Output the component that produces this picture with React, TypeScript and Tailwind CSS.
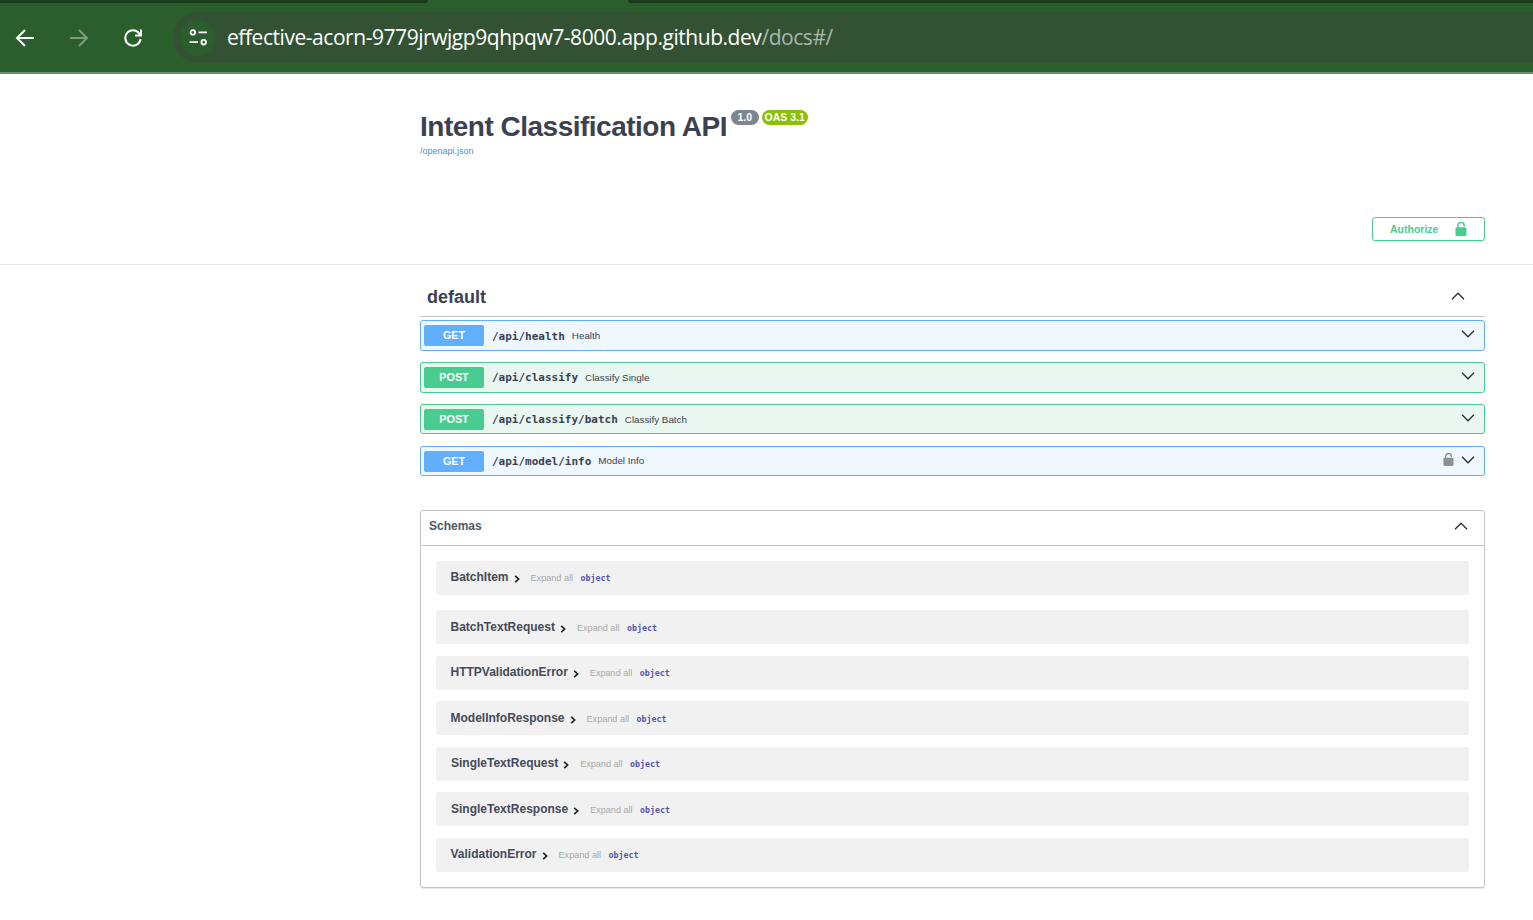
const sans = "font-['Liberation_Sans',Arial,sans-serif]";
const mono = "font-['DejaVu_Sans_Mono','Liberation_Mono',monospace]";

type Op = { method: "GET" | "POST"; path: string; summary: string; locked?: boolean; h: string; mt: string; labelMt: string; summaryMt: string };

const ops: Op[] = [
  { method: "GET", path: "/api/health", summary: "Health", h: "h-[31px]", mt: "mt-[3px]", labelMt: "mt-[4px]", summaryMt: "mt-px" },
  { method: "POST", path: "/api/classify", summary: "Classify Single", h: "h-[31px]", mt: "mt-[11px]", labelMt: "mt-[2px]", summaryMt: "mt-px" },
  { method: "POST", path: "/api/classify/batch", summary: "Classify Batch", h: "h-[30px]", mt: "mt-[11px]", labelMt: "mt-[2px]", summaryMt: "mt-[3px]" },
  { method: "GET", path: "/api/model/info", summary: "Model Info", locked: true, h: "h-[30px]", mt: "mt-[12px]", labelMt: "mt-[2px]", summaryMt: "mt-px" },
];

const schemas = [
  { name: "BatchItem", row: "mt-[15px] pl-[14.5px]" },
  { name: "BatchTextRequest", row: "mt-[15px] pl-[14.5px] pt-[2px]" },
  { name: "HTTPValidationError", row: "mt-[12px] pl-[14.5px]" },
  { name: "ModelInfoResponse", row: "mt-[11px] pl-[14.5px] pt-[2px]" },
  { name: "SingleTextRequest", row: "mt-[12px] pl-[15px]" },
  { name: "SingleTextResponse", row: "mt-[11px] pl-[15px] pt-[2px]" },
  { name: "ValidationError", row: "mt-[12px] pl-[14.5px]" },
];

function Chevron({ up, className }: { up?: boolean; className?: string }) {
  return (
    <svg viewBox="0 0 14 8" className={className} fill="none" stroke="#2b2f36" strokeWidth="1.3">
      <path d={up ? "M1 7.2 7 1.2l6 6" : "M1 .8l6 6 6-6"} />
    </svg>
  );
}

function Lock({ color, className }: { color: string; className?: string }) {
  return (
    <svg viewBox="0 0 12 14" className={className}>
      <path d="M2.8 6.5V3.6a3.2 3.2 0 0 1 6.4 0V4.6" fill="none" stroke={color} strokeWidth="1.5" />
      <rect x="0.5" y="5.2" width="11" height="8.8" rx="1.6" fill={color} />
    </svg>
  );
}

function Browser() {
  return (
    <header className="h-[74px] bg-[#2a5e2c] border-b-2 border-b-[#6d8f6e] relative shrink-0">
      <div className="absolute left-0 top-0 h-[3px] w-[428px] bg-[#1b3b1c] rounded-br-md" />
      <div className="absolute left-[628px] right-0 top-0 h-[3px] bg-[#1b3b1c] rounded-bl-md" />
      <div className="flex items-center h-[72px] pt-[3px]">
        <svg viewBox="0 0 20 20" className="w-5 h-5 ml-[15px]" fill="none" stroke="#fff" strokeWidth="2">
          <path d="M19 10H2M10 2l-8 8 8 8" />
        </svg>
        <svg viewBox="0 0 20 20" className="w-5 h-5 ml-[34px]" fill="none" stroke="#7f9d80" strokeWidth="2">
          <path d="M1 10h17M10 2l8 8-8 8" />
        </svg>
        <svg viewBox="0 0 20 20" className="w-5 h-5 ml-[34px] -mt-px" fill="none" stroke="#fff" strokeWidth="2">
          <path d="M17.2 8.2A7.7 7.7 0 1 0 17.6 12" />
          <path d="M18 2.5V8.5H12" />
        </svg>
        <div className="ml-[30px] flex-1 h-[51px] bg-[#325233] rounded-l-[26px] flex items-center pl-[7px]">
          <div className="w-9 h-9 rounded-full bg-[#2a5e2c] flex items-center justify-center">
            <svg viewBox="0 0 20 18" className="w-[19px] h-[17px]" fill="none" stroke="#fff" strokeWidth="1.9">
              <circle cx="4" cy="3.6" r="2.4" />
              <path d="M10 3.6h9M0.5 14h9" />
              <circle cx="15.5" cy="14" r="2.4" />
            </svg>
          </div>
          <div className="ml-[11px] text-[21px] tracking-[-0.45px] font-['Open_Sans',sans-serif] text-white whitespace-nowrap">
            effective-acorn-9779jrwjgp9qhpqw7-8000.app.github.dev<span className="text-[#a9b8a9]">/docs#/</span>
          </div>
        </div>
      </div>
    </header>
  );
}

function OpRow({ op }: { op: Op }) {
  const get = op.method === "GET";
  return (
    <div
      className={`${op.h} ${op.mt} flex items-center rounded-[3px] border pl-[3px] pr-[9px] ${
        get ? "border-[#61affe] bg-[#eff7ff]" : "border-[#49cc90] bg-[#e9f7f0]"
      }`}
    >
      <div
        className={`w-[60px] h-[21px] rounded-[2px] flex items-center justify-center text-white font-bold text-[10.8px] ${
          get ? "bg-[#61affe]" : "bg-[#49cc90]"
        }`}
      >
        {op.method}
      </div>
      <span className={`ml-[8px] ${op.labelMt} ${mono} font-bold text-[#3b4151] text-[11px]`}>{op.path}</span>
      <span className={`ml-[7px] ${op.summaryMt} text-[#3b4151] text-[9.8px]`}>{op.summary}</span>
      <div className="ml-auto flex items-center">
        {op.locked && <Lock color="#8c8f94" className="w-[11px] h-[13px] mr-[7px] -mt-[3px]" />}
        <Chevron className="w-[14px] h-[8px] -mt-[3px]" />
      </div>
    </div>
  );
}

function SchemaRow({ name, row }: { name: string; row: string }) {
  return (
    <div className={`${row} h-[34px] bg-[#f1f1f1] rounded-[3px] flex items-center`}>
      <span className="text-[12px] font-bold text-[#454a58] -mt-[2px]">{name}</span>
      <svg viewBox="0 0 6 8" className="w-[6px] h-[8px] ml-[5px] mt-[2px]" fill="none" stroke="#222" strokeWidth="1.7">
        <path d="M1.2 .8 4.6 4 1.2 7.2" />
      </svg>
      <span className="ml-[11px] mt-[2px] text-[9.1px] text-[#a8a8a8]">Expand all</span>
      <span className={`ml-[7.5px] ${mono} font-bold text-[8.3px] text-[#55a]`}>object</span>
    </div>
  );
}

export default function App() {
  return (
    <div className={`h-[920px] overflow-hidden bg-white flex flex-col ${sans}`}>
      <Browser />
      <div className="h-[191px] shrink-0 border-b border-[#e4e4e4] relative pl-[420px]">
        <div className="pt-[35px] flex items-start">
          <h1 className="text-[28px] tracking-[-0.5px] leading-[36px] font-bold text-[#3b4151] whitespace-nowrap">Intent Classification API</h1>
          <span className="ml-[4px] mt-[1px] h-[15px] px-[6.5px] rounded-full bg-[#7d8492] text-white font-bold text-[10.5px] leading-[15px]">1.0</span>
          <span className="ml-[3px] mt-[1px] h-[15px] px-[3px] rounded-full bg-[#89bf04] text-white font-bold text-[10.5px] leading-[15px]">OAS 3.1</span>
        </div>
        <div className="text-[#4990e2] text-[9px] mt-0">/openapi.json</div>
        <div className="absolute left-[1372px] top-[143px] w-[113px] h-[24px] rounded-[3px] border border-[#49cc90] flex items-center pl-[17px] shadow-[0_1px_2px_rgba(0,0,0,0.1)]">
          <span className="text-[#49cc90] font-bold text-[10.5px] mt-[2px]">Authorize</span>
          <Lock color="#49cc90" className="w-[12px] h-[14px] ml-[16.5px]" />
        </div>
      </div>

      <main className="pl-[420px] pr-[48px]">
        <div className="h-[52px] pt-[12px] flex items-center border-b border-[#c4c4c4] pl-[7px] pr-[20px]">
          <h2 className="text-[18px] font-bold text-[#3b4151] mt-[1px]">default</h2>
          <Chevron up className="w-[14px] h-[8px] ml-auto -mt-[1px]" />
        </div>
        {ops.map((op) => (
          <OpRow key={op.path} op={op} />
        ))}

        <section className="mt-[34px] h-[378px] rounded-[3px] border border-[#c4c4c4] shadow-[0_1px_1px_rgba(0,0,0,0.1)]">
          <div className="h-[35px] border-b border-[#c4c4c4] flex items-center pl-[8px] pr-[16px]">
            <span className="text-[12px] font-bold text-[#505662] -mt-[4px]">Schemas</span>
            <Chevron up className="w-[14px] h-[8px] ml-auto -mt-[5px]" />
          </div>
          <div className="px-[15px]">
            {schemas.map((s) => (
              <SchemaRow key={s.name} {...s} />
            ))}
          </div>
        </section>
      </main>
    </div>
  );
}
